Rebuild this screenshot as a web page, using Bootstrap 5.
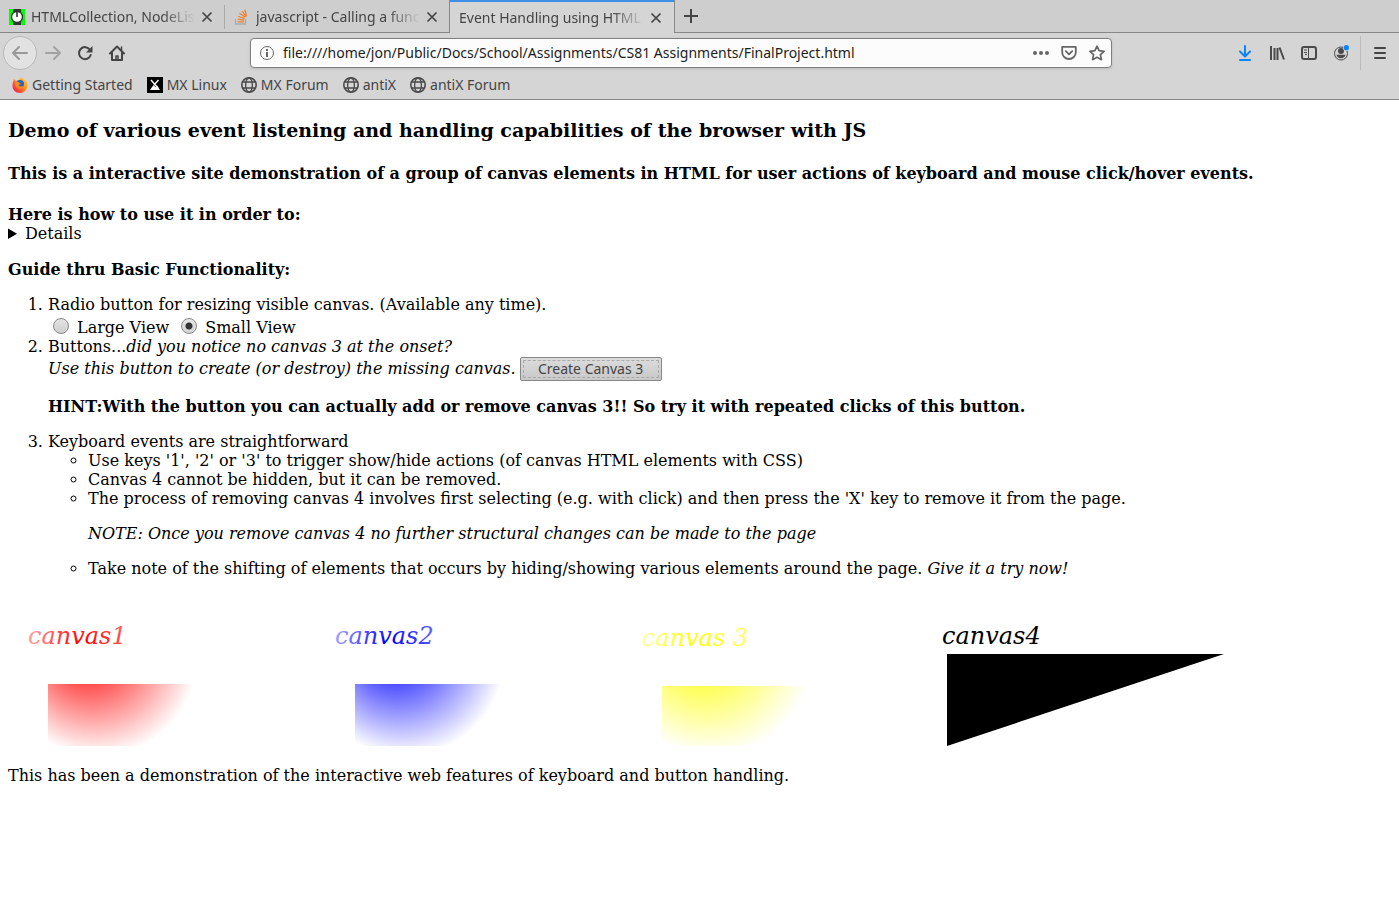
<!DOCTYPE html>
<html lang="en">
<head>
<meta charset="utf-8">
<meta name="viewport" content="width=device-width, initial-scale=1">
<title>Event Handling using HTML</title>
<link href="https://cdn.jsdelivr.net/npm/bootstrap@5.3.0/dist/css/bootstrap.min.css" rel="stylesheet">
<style>
  body { font-family: "DejaVu Serif", serif; font-size: 16px; line-height: 19px; color: #000; background: #fff; }
  .browser { font-family: "Noto Sans", sans-serif; font-size: 14px; line-height: 20px; color: #444; background: #d5d5d5; border-bottom: 1px solid #888; }
  .browser button { background: none; border: 0; padding: 0; color: inherit; }
  .browser svg { flex: none; display: block; }

  .tab-strip { height: 33px; background: #cecece; }
  .tab-item { flex: 0 1 225px; min-width: 0; padding: 2px 10px 0 9px; border-bottom: 1px solid #888; }
  .tab-item.split::after { content: ""; position: absolute; right: 0; top: 5px; height: 24px; border-right: 1px solid #aaa; }
  .tab-item.current { flex-basis: 226px; margin-left: -1px; background: #d5d5d5; border: 1px solid #888; border-width: 0 1px; box-shadow: inset 0 2px #3f8fe8; }
  .tab-item a { color: inherit; -webkit-mask-image: linear-gradient(to left, transparent, #000 32px); mask-image: linear-gradient(to left, transparent, #000 32px); }
  .tab-item svg + a { margin-left: 6px; }
  .tab-rest { border-bottom: 1px solid #888; }

  .toolbar-row { height: 40px; }
  .tool { width: 32px; height: 32px; display: flex; align-items: center; justify-content: center; flex: none; }
  .browser .back { width: 34px; height: 34px; margin-left: 3px; background: #e2e2e2; border: 1px solid #b8b8b8; border-radius: 50%; color: #999; }
  .spring { flex: 117 1 0; }
  .address { flex: 846 1 0; min-width: 0; height: 30px; background: #fcfcfc; border: 1px solid #808080; border-radius: 4px; box-shadow: 0 1px 3px #bbb; padding: 0 6px 0 8px; color: #666; }
  .address input { border: 0; background: none; outline: 0; color: #1c1c1c; padding: 0; min-width: 0; }
  .divider { width: 1px; height: 34px; background: #bbb; margin-left: 3px; }
  .menu { width: 38px; }
  .bookmarks { height: 26px; padding: 0 12px 2px; gap: 14px; }
  .bookmarks a { color: inherit; }

  .page-title { font-size: 19px; line-height: 22px; font-weight: 700; margin: 11px 0 23px; }
  .page-lead { font-size: 16px; line-height: 19px; font-weight: 700; margin: 0 0 22px; }
  .page-body p { margin: 16px 0; }
  .page-body details { margin-bottom: 17px; }
  .page-body ol, .page-body ul { padding-left: 40px; margin: 0; }
  .page-body ul { list-style: circle; }
  .choices { height: 23px; gap: 8px; padding: 0 5px; }
  .choices input { appearance: none; width: 16px; height: 16px; margin: 0; border: 1px solid #888; border-radius: 50%; background: linear-gradient(#e4e4e4, #cfcfcf); }
  .choices input:checked { background: radial-gradient(circle, #333 3px, transparent 4px), linear-gradient(#e8e8e8, #d2d2d2); }
  .choices label { padding-top: 4px; }
  .action-row { height: 25px; }
  .make-canvas { height: 24px; width: 142px; padding: 2px; border: 1px solid #888; border-radius: 2px; background: linear-gradient(#dcdcdc, #c8c8c8); font: 14px/16px "Noto Sans", sans-serif; color: #444; }
  .make-canvas span { display: block; border: 1px dashed #aaa; }
  .canvases { gap: 7px; margin: 18px 0 20px; }
  .canvases svg { display: block; flex: none; }
  .canvases text { font: italic 24px "DejaVu Serif", serif; }
</style>
</head>
<body>
<header class="browser">
  <nav class="tab-strip d-flex" aria-label="Tabs">
    <div class="tab-item split position-relative d-flex align-items-center">
      <svg width="16" height="16" viewBox="0 0 16 16"><path fill="#0f0" d="M0 0h16v16H0z"/><path fill="#333" d="M4 0h8v3l2 3v4l-2 3v3H4v-3l-2-3V6l2-3z"/><circle cx="8" cy="8" r="4.800" fill="#fff"/><path d="M8 3v5" stroke="#222" stroke-width="1.500"/></svg>
      <a href="#" class="flex-grow-1 overflow-hidden text-nowrap text-decoration-none">HTMLCollection, NodeList</a>
      <button class="ms-1" aria-label="Close tab"><svg width="16" height="16" viewBox="0 0 16 16"><path d="M3.500 3.500l9 9m0-9l-9 9" stroke="#444" stroke-width="1.700"/></svg></button>
    </div>
    <div class="tab-item position-relative d-flex align-items-center">
      <svg width="16" height="16" viewBox="0 0 16 16" fill="none"><path d="M1.500 10v5h10v-5" stroke="#aaa" stroke-width="1.300"/><path d="M3.500 12.800h6.500M3.700 10.200l6.500 1M4.200 7.300l6.300 2.300M5.500 4.300l5.800 4M8 2l4.300 5.600M10.800.5l1.700 6.500" stroke="#f08030" stroke-width="1.200"/></svg>
      <a href="#" class="flex-grow-1 overflow-hidden text-nowrap text-decoration-none">javascript - Calling a func</a>
      <button class="ms-1" aria-label="Close tab"><svg width="16" height="16" viewBox="0 0 16 16"><path d="M3.500 3.500l9 9m0-9l-9 9" stroke="#444" stroke-width="1.700"/></svg></button>
    </div>
    <div class="tab-item current d-flex align-items-center">
      <a href="#" class="flex-grow-1 overflow-hidden text-nowrap text-decoration-none" aria-current="page">Event Handling using HTML</a>
      <button class="ms-1" aria-label="Close tab"><svg width="16" height="16" viewBox="0 0 16 16"><path d="M3.500 3.500l9 9m0-9l-9 9" stroke="#444" stroke-width="1.700"/></svg></button>
    </div>
    <div class="tab-rest flex-grow-1 d-flex align-items-center">
      <button class="tool" aria-label="New tab"><svg width="16" height="16" viewBox="0 0 16 16"><path d="M8 1v14M1 8h14" stroke="#444" stroke-width="2"/></svg></button>
    </div>
  </nav>

  <div class="toolbar-row d-flex align-items-center">
    <button class="tool back" aria-label="Back"><svg width="16" height="16" viewBox="0 0 16 16" fill="none" stroke="#999" stroke-width="2" stroke-linecap="round" stroke-linejoin="round"><path d="M15 8H1m6-6L1 8l6 6"/></svg></button>
    <button class="tool" aria-label="Forward"><svg width="16" height="16" viewBox="0 0 16 16" fill="none" stroke="#a2a2a2" stroke-width="2" stroke-linecap="round" stroke-linejoin="round"><path d="M1 8h14M9 2l6 6-6 6"/></svg></button>
    <button class="tool" aria-label="Reload"><svg width="16" height="16" viewBox="0 0 16 16" fill="none"><path d="M13 4.800A6 6 0 1 0 13.700 10" stroke="#444" stroke-width="2" stroke-linecap="round"/><path d="M15.500 1v6.500H9z" fill="#444"/></svg></button>
    <button class="tool" aria-label="Home"><svg width="16" height="16" viewBox="0 0 16 16" fill="none" stroke="#444" stroke-width="2" stroke-linejoin="round" stroke-linecap="round"><path d="M1 8.500L8 1.500l7 7M3 8v7h10V8"/><path d="M7 14v-3h2v3" stroke-width="1.500"/><path d="M12.500 2v3" stroke-width="1.500"/></svg></button>
    <div class="spring"></div>
    <div class="address d-flex align-items-center">
      <svg width="16" height="16" viewBox="0 0 16 16" fill="none" stroke="#666"><circle cx="8" cy="8" r="6.500"/><path d="M8 7v5M8 4v2" stroke-width="2"/></svg>
      <input class="flex-grow-1 ms-2 me-2" type="text" aria-label="Address" value="file:////home/jon/Public/Docs/School/Assignments/CS81 Assignments/FinalProject.html">
      <button class="me-1 pe-2" aria-label="Page actions"><svg width="16" height="16" viewBox="0 0 16 16" fill="#666"><circle cx="2" cy="8" r="2"/><circle cx="8" cy="8" r="2"/><circle cx="14" cy="8" r="2"/></svg></button>
      <button class="me-1 pe-2" aria-label="Save to Pocket"><svg width="16" height="16" viewBox="0 0 16 16" fill="none" stroke="#666" stroke-width="1.800" stroke-linecap="round" stroke-linejoin="round"><path d="M1.200 1.900h13.600v5.300a6.800 6.800 0 0 1-13.600 0z"/><path d="M4.800 6.200L8 9.300l3.200-3.100"/></svg></button>
      <button aria-label="Bookmark this page"><svg width="16" height="16" viewBox="0 0 16 16" fill="none" stroke="#666" stroke-width="1.700" stroke-linejoin="round"><path d="M8 1.200l2.100 4.500 5 .6-3.700 3.400 1 5L8 12.300l-4.400 2.400 1-5L.9 6.300l5-.6z"/></svg></button>
    </div>
    <div class="spring"></div>
    <button class="tool" aria-label="Downloads"><svg width="16" height="16" viewBox="0 0 16 16" fill="none" stroke="#0a84ff" stroke-width="2" stroke-linecap="round" stroke-linejoin="round"><path d="M8 1v10M3 6.500l5 5 5-5M3 15h10"/></svg></button>
    <button class="tool" aria-label="Library"><svg width="16" height="16" viewBox="0 0 16 16" fill="none" stroke="#4a4a4a" stroke-width="2"><path d="M2 1v14M5.500 3v12M8.500 3v12M10.500 2.500l4.500 12"/></svg></button>
    <button class="tool" aria-label="Sidebars"><svg width="16" height="16" viewBox="0 0 16 16" fill="none" stroke="#4a4a4a"><rect x="1" y="2" width="14" height="12" rx="2" stroke-width="2"/><path d="M7.500 2v12M3 5h3M3 7.500h3M4 9.500h2"/></svg></button>
    <button class="tool" aria-label="Account"><svg width="16" height="16" viewBox="0 0 16 16"><circle cx="8" cy="8.500" r="6.500" fill="none" stroke="#4a4a4a"/><circle cx="8" cy="6" r="3" fill="#4a4a4a"/><path d="M3.500 9.800h9c-.5 2.200-2 3.500-4.500 3.500s-4-1.300-4.500-3.500z" fill="#4a4a4a"/><circle cx="13.300" cy="2.700" r="3.200" fill="#d5d5d5"/><circle cx="13.300" cy="2.700" r="2.600" fill="#0a84ff"/></svg></button>
    <div class="divider"></div>
    <button class="tool menu" aria-label="Menu"><svg width="16" height="16" viewBox="0 0 16 16" stroke="#444" stroke-width="2" stroke-linecap="round"><path d="M3 3h10M3 8h10M3 13h10"/></svg></button>
  </div>

  <nav class="bookmarks d-flex align-items-center" aria-label="Bookmarks">
    <a href="#" class="d-flex align-items-center gap-1 text-decoration-none">
      <svg width="16" height="16" viewBox="0 0 16 16"><defs><linearGradient id="fox" x1="1" y1="0" x2="0" y2="1"><stop offset="0" stop-color="#ffe23a"/><stop offset=".45" stop-color="#ff9020"/><stop offset=".8" stop-color="#ff3040"/><stop offset="1" stop-color="#e5127a"/></linearGradient></defs><path fill="url(#fox)" d="M2 2l2 2 3-1 2-3c1 2 5 2 6.500 7 .5 5-3 9-7.500 9S0 12.500.5 8C.6 5.500 1.500 4 2 2z"/><circle cx="8" cy="7" r="4" fill="#2865c8"/><path d="M3 5c2-1 3 0 4 .5L9 7 6.500 8c1 2 3 2 5 .5-.5 3-4 4-6 2.500S3 8 3 5z" fill="#ff8a18"/></svg>Getting Started</a>
    <a href="#" class="d-flex align-items-center gap-1 text-decoration-none">
      <svg width="16" height="16" viewBox="0 0 16 16"><path d="M0 0h16v16H0z"/><path d="M4 3l7 8M11.500 3L7 8" stroke="#fff" stroke-width="1.400"/><path d="M3 13l3.500-5 2 2 1.500-1.500 3 4.500z" fill="#fff"/></svg>MX Linux</a>
    <a href="#" class="d-flex align-items-center gap-1 text-decoration-none">
      <svg width="16" height="16" viewBox="0 0 16 16" fill="none" stroke="#4a4a4a" stroke-width="1.300"><g id="globe"><circle cx="8" cy="8" r="7.200" stroke-width="1.600"/><ellipse cx="8" cy="8" rx="3.400" ry="7"/><path d="M2 5h12M2 11h12"/></g></svg>MX Forum</a>
    <a href="#" class="d-flex align-items-center gap-1 text-decoration-none">
      <svg width="16" height="16" viewBox="0 0 16 16" fill="none" stroke="#4a4a4a" stroke-width="1.300"><use href="#globe"/></svg>antiX</a>
    <a href="#" class="d-flex align-items-center gap-1 text-decoration-none">
      <svg width="16" height="16" viewBox="0 0 16 16" fill="none" stroke="#4a4a4a" stroke-width="1.300"><use href="#globe"/></svg>antiX Forum</a>
  </nav>
</header>

<main class="page-body p-2">
  <h3 class="page-title">Demo of various event listening and handling capabilities of the browser with JS</h3>
  <h4 class="page-lead">This is a interactive site demonstration of a group of canvas elements in HTML for user actions of keyboard and mouse click/hover events.</h4>
  <b>Here is how to use it in order to:</b>
  <details>
    <summary>Details</summary>
  </details>
  <p><b>Guide thru Basic Functionality:</b></p>
  <ol>
    <li>Radio button for resizing visible canvas. (Available any time).
      <div class="choices d-flex align-items-center">
        <input type="radio" name="view" id="large"><label for="large">Large View</label>
        <input type="radio" name="view" id="small-view" class="ms-1" checked><label for="small-view">Small View</label>
      </div>
    </li>
    <li>Buttons...<i>did you notice no canvas 3 at the onset?</i>
      <div class="action-row d-flex align-items-center gap-1"><i>Use this button to create (or destroy) the missing canvas.</i>
        <button class="make-canvas"><span>Create Canvas 3</span></button></div>
      <p><b>HINT:With the button you can actually add or remove canvas 3!! So try it with repeated clicks of this button.</b></p>
    </li>
    <li>Keyboard events are straightforward
      <ul>
        <li>Use keys '1', '2' or '3' to trigger show/hide actions (of canvas HTML elements with CSS)</li>
        <li>Canvas 4 cannot be hidden, but it can be removed.</li>
        <li>The process of removing canvas 4 involves first selecting (e.g. with click) and then press the 'X' key to remove it from the page.
          <p><i>NOTE: Once you remove canvas 4 no further structural changes can be made to the page</i></p></li>
        <li>Take note of the shifting of elements that occurs by hiding/showing various elements around the page. <i>Give it a try now!</i></li>
      </ul>
    </li>
  </ol>

  <div class="canvases d-flex">
    <svg width="300" height="150">
      <defs><radialGradient id="red" gradientUnits="userSpaceOnUse" cx="90" cy="60" r="100" fx="75" fy="50" fr="5"><stop offset="0" stop-color="#f00"/><stop offset="1" stop-color="#fff"/></radialGradient></defs>
      <text x="20" y="48" fill="url(#red)">canvas1</text>
      <rect x="40" y="88" width="200" height="62" fill="url(#red)"/>
    </svg>
    <svg width="300" height="150">
      <defs><radialGradient id="blue" gradientUnits="userSpaceOnUse" cx="90" cy="60" r="100" fx="75" fy="50" fr="5"><stop offset="0" stop-color="#00f"/><stop offset="1" stop-color="#fff"/></radialGradient></defs>
      <text x="20" y="48" fill="url(#blue)">canvas2</text>
      <rect x="40" y="88" width="200" height="62" fill="url(#blue)"/>
    </svg>
    <div class="d-flex">
      <svg width="300" height="150">
        <defs><radialGradient id="yellow" gradientUnits="userSpaceOnUse" cx="90" cy="60" r="100" fx="75" fy="50" fr="5"><stop offset="0" stop-color="#ff0"/><stop offset="1" stop-color="#fff"/></radialGradient></defs>
        <text x="20" y="50" fill="url(#yellow)">canvas 3</text>
        <rect x="40" y="90" width="200" height="60" fill="url(#yellow)"/>
      </svg>
      <svg width="302" height="150">
        <text x="20" y="48">canvas4</text>
        <path d="M25 58h277L25 150z"/>
      </svg>
    </div>
  </div>
  <div>This has been a demonstration of the interactive web features of keyboard and button handling.</div>
</main>
<script src="https://cdn.jsdelivr.net/npm/bootstrap@5.3.0/dist/js/bootstrap.bundle.min.js"></script>
</body>
</html>
